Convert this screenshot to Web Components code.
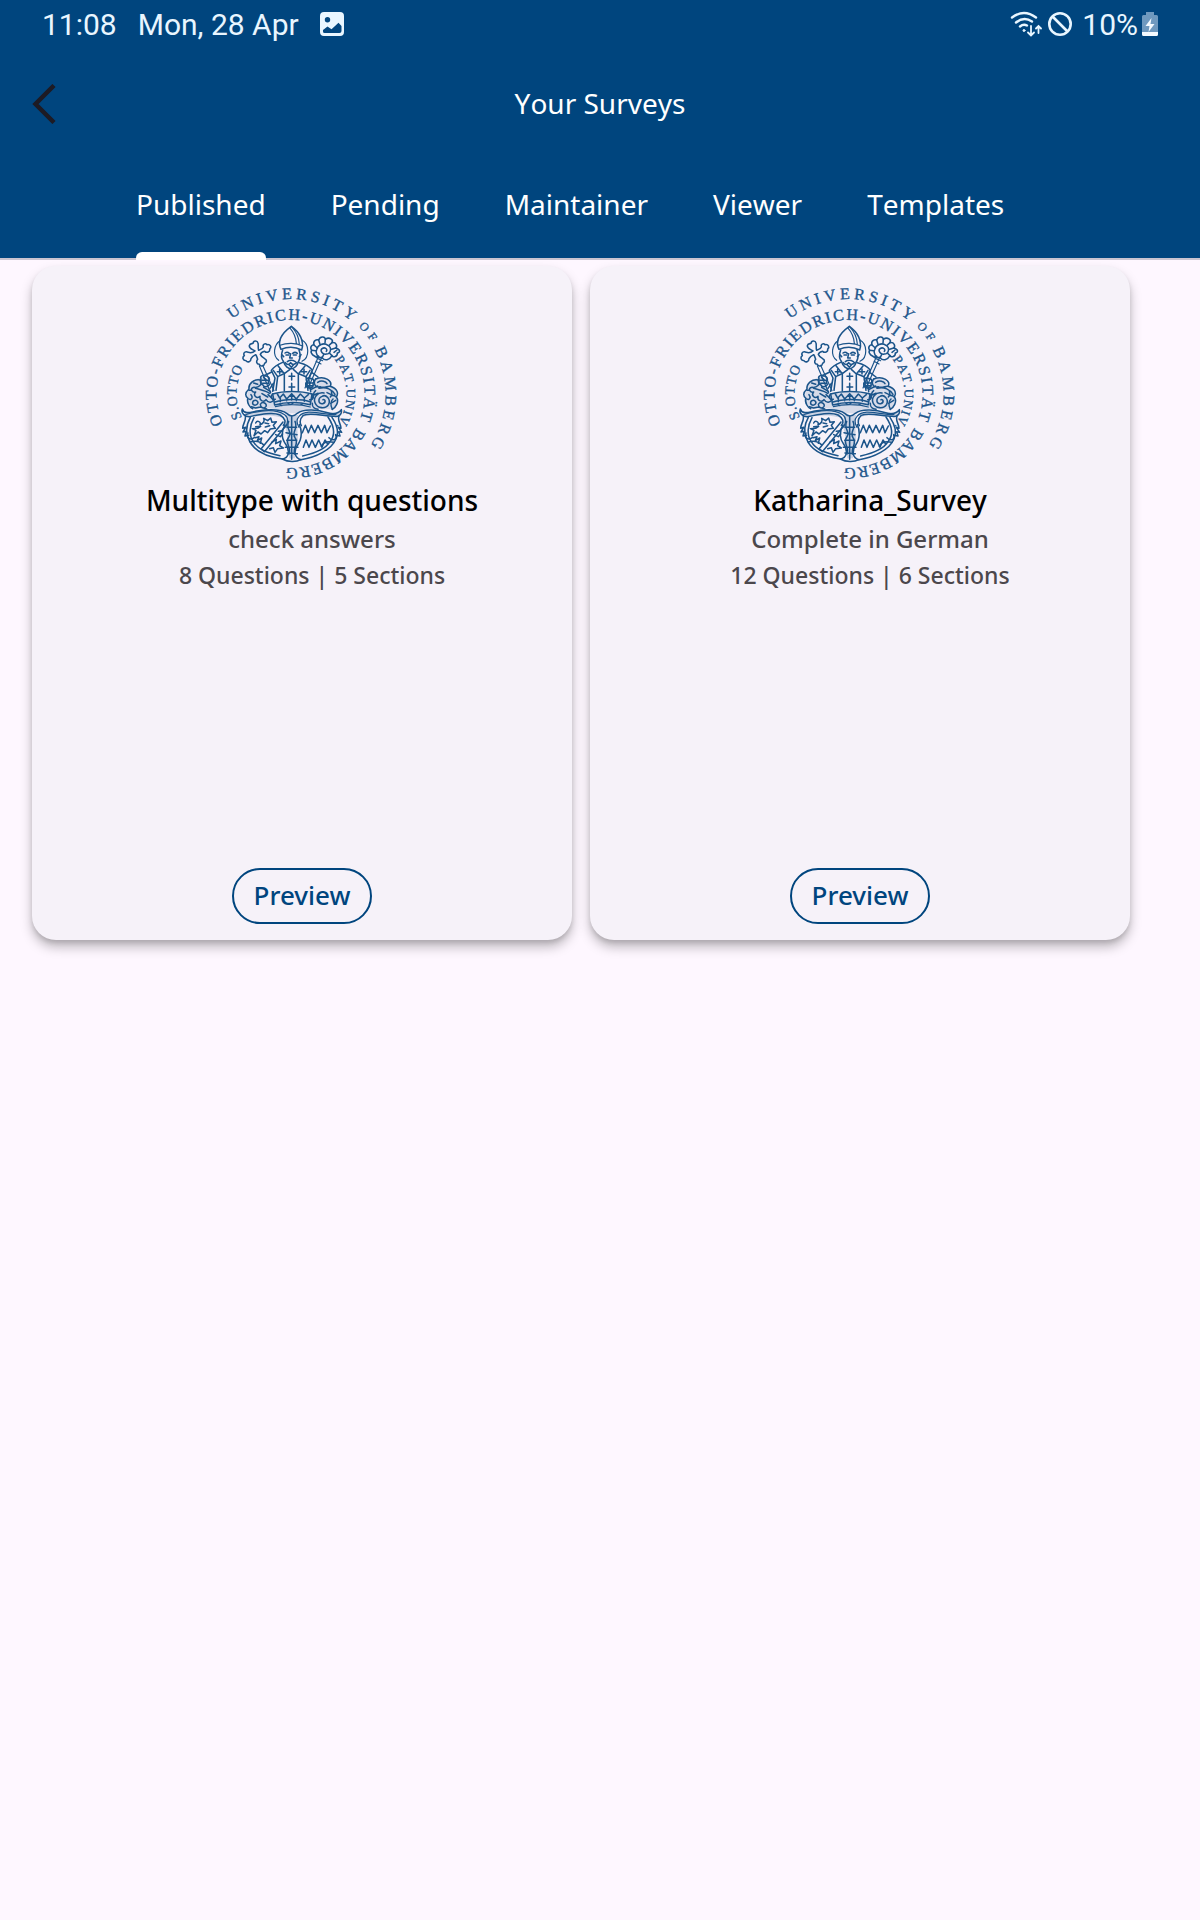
<!DOCTYPE html>
<html lang="en">
<head>
<meta charset="utf-8">
<meta name="viewport" content="width=device-width, initial-scale=1">
<title>Your Surveys</title>
<style>
  :root {
    --brand: #00457e;
    --surface: #fef7ff;
    --card: #f6f2f9;
    --muted: #4b474c;
    --divider: #cac4d0;
  }
  body {
    margin: 0;
    min-height: 100vh;
    background: var(--surface);
    font-family: "Noto Sans", "Open Sans", sans-serif;
    font-kerning: none;
  }
</style>
</head>
<body>
<survey-app></survey-app>

<template id="t-status">
  <style>
    :host {
      display: flex; justify-content: space-between; align-items: center;
      height: 48px; padding: 0 42px;
      font: 30px/46px Roboto, sans-serif; color: #e9f6ff;
    }
    div { display: flex; align-items: center; }
    span { padding-top: 2px; }
    .left { gap: 21px; }
    .right { gap: 6px; }
    .right span { margin: 0 -2px 0 4px; }
    svg { display: block; }
  </style>
  <div class="left">
    <span>11:08</span>
    <span>Mon, 28 Apr</span>
    <svg width="24" height="24" viewBox="0 0 24 24" aria-hidden="true">
      <path fill="#e9f6ff" fill-rule="evenodd" d="M4 0H20A4 4 0 0 1 24 4V20A4 4 0 0 1 20 24H4A4 4 0 0 1 0 20V4A4 4 0 0 1 4 0ZM7.500 5A2.700 2.700 0 1 0 7.500 10.400A2.700 2.700 0 1 0 7.500 5ZM3 19.500Q3 21 4.500 21H19.500Q21.500 21 21.500 19V14L18.500 10.800L11.500 17.300L7.500 14.500L3 18Z"/>
    </svg>
  </div>
  <div class="right">
    <svg width="32" height="26" viewBox="0 0 32 26" fill="none" stroke="#e9f6ff" stroke-width="2.400" stroke-linecap="round" aria-hidden="true">
      <path d="M2 6.500Q14 -2.500 26 6.500M6 11.500Q14 5 22 10.500M10 15.500Q13.500 12.500 17 14.500"/>
      <circle cx="14" cy="19.500" r="1" fill="#e9f6ff" stroke-width="1"/>
      <path d="M21 15V24M18 21.500L21 24.500L24 21.500M28.500 22V15.500M26 17.500L28.500 15L31 17.500" stroke-width="1.800"/>
    </svg>
    <svg width="24" height="24" viewBox="0 0 24 24" fill="none" stroke="#e9f6ff" stroke-width="2.600" aria-hidden="true">
      <circle cx="12" cy="12" r="10.700"/><path d="M4.500 4.500L19.500 19.500"/>
    </svg>
    <span>10%</span>
    <svg width="16" height="24" viewBox="0 0 16 24" aria-hidden="true">
      <path fill="#6f99bf" d="M4 0H12V3H14.500Q16 3 16 4.500V20H0V4.500Q0 3 1.500 3H4Z"/>
      <path fill="#f4faff" d="M0 20H16V22.500Q16 24 14.500 24H1.500Q0 24 0 22.500ZM9.500 6L3.500 14H7.500L6.500 20L12.500 12H8.500Z"/>
    </svg>
  </div>
</template>

<template id="t-bar">
  <style>
    :host {
      display: grid; grid-template-columns: 88px 1fr 88px; align-items: center;
      height: 112px; color: #fff;
    }
    button { width: 88px; height: 88px; padding: 0; border: 0; background: none; display: grid; place-items: center; }
    h1 { margin: 0; padding-bottom: 2px; font-size: 28px; line-height: 38px; font-weight: 400; text-align: center; }
  </style>
  <button type="button" aria-label="Back">
    <svg width="24" height="40" viewBox="0 0 24 40" fill="none" stroke="#1d1b24" stroke-width="4.500" aria-hidden="true"><path d="M22 1.500L3.500 20L22 38.500"/></svg>
  </button>
  <h1><slot></slot></h1>
</template>

<template id="t-tabs">
  <style>
    :host { display: block; box-shadow: inset 0 -2px var(--divider); padding-left: 136px; }
    nav { display: flex; gap: 65px; }
  </style>
  <nav aria-label="Survey groups"><slot></slot></nav>
</template>

<template id="t-tab">
  <style>
    :host { display: block; }
    a {
      display: block; padding-top: 24px;
      color: #fff; text-decoration: none; font-size: 28px; line-height: 40px;
    }
    a::after { content: ""; display: block; height: 8px; margin-top: 28px; }
    :host([selected]) a::after { background: #fff; border-radius: 6px 6px 0 0; }
  </style>
  <a href="#"><slot></slot></a>
</template>

<template id="t-seal">
  <style>
    :host { display: block; width: 192px; height: 192px; }
    svg { display: block; overflow: visible; }
    text { font-family: "Liberation Serif", serif; fill: #1d568c; stroke: #1d568c; stroke-width: .35px; }
    .lines path { stroke-width: 4.600px; }
    .lines .thin { stroke-width: 3.500px; }
  </style>
  <svg width="192" height="192" viewBox="206 288 192 192" role="img" aria-label="University seal">
    <g id="ring"></g>
    <g class="lines" transform="translate(230 320) scale(.33333)" fill="none" stroke="#1b548a" stroke-linejoin="round" stroke-linecap="round">
      <!-- shading behind the mantling, crown and scrolls -->
      <path fill="#1d568c" fill-opacity=".14" stroke="none" d="M101 170C70 176 50 195 52 225C45 245 55 262 70 268C110 262 145 264 168 280H200C225 264 270 268 310 268C328 245 322 205 300 195C290 170 262 172 257 180L240 205V222C210 214 160 214 130 222L118 200Z"/>
      <path fill="#1d568c" fill-opacity=".2" stroke="none" d="M168 285H204L202 322L204 360L195 415H178L168 370L172 350L165 315ZM37 270C60 288 110 262 160 284L150 292C110 280 80 292 52 290ZM334 270C315 288 260 262 212 284L220 290C260 280 300 292 325 288Z"/>
      <!-- halo and mitre -->
      <path class="thin" d="M146 121C126 106 132 74 150 62M216 124C240 112 238 72 216 60"/>
      <path d="M153 88C142 66 152 42 184 19C208 36 224 62 215 90C196 80 172 80 153 88Z"/>
      <path class="thin" d="M150 76C170 68 198 68 218 78M184 19C198 34 207 50 208 72M179 23C192 38 198 52 199 70"/>
      <!-- face -->
      <path d="M158 90C153 104 155 118 160 124C165 140 176 147 184 146C194 146 202 136 206 124C211 114 211 100 207 90"/>
      <path d="M165 99Q172 94 178 100M188 100Q195 94 202 100M182 101L179 114H187M172 125Q183 117 196 125M166 128C172 136 177 134 182 128C188 136 194 134 201 127M178 135L184 142L190 135M161 110L155 104M208 110L213 104"/>
      <path d="M168 105H176M190 105H199"/>
      <!-- vestment -->
      <path d="M158 127C144 133 132 140 124 151L135 174L128 214M208 128C224 132 238 139 247 150L236 176L242 215"/>
      <path d="M144 137L163 161L180 148M225 138L205 162L190 148M163 161V213M205 162V213M143 170L138 211M228 170L234 211"/>
      <path d="M130 151L143 170L160 162M240 151L228 170L208 162"/>
      <path d="M185 160V180M177 169H194M185 190V212M177 201H194M149 147V162M142 155H157M222 147V162M214 155H230"/>
      <!-- processional cross -->
      <path d="M75 93C66 87 57 86 58 77C60 69 66 72 69 70C70 61 82 61 84 69C86 76 83 82 86 91C92 88 98 86 100 81C97 73 106 68 111 74C121 72 126 81 119 87C121 96 110 100 104 94C98 95 93 98 91 103C94 110 98 113 104 116C112 119 110 128 104 130C102 140 91 140 88 133C79 132 78 124 83 118C81 111 80 107 77 104C71 107 66 110 63 116C63 125 53 129 48 122C38 122 36 112 43 107C38 98 47 92 55 97C62 99 69 98 75 93Z"/>
      <path class="thin" d="M88 137L122 219M98 136L132 212"/>
      <path d="M93 176C89 169 99 163 107 168C117 168 122 178 115 184L118 194C111 203 101 202 99 195C91 193 90 184 93 176ZM96 181H114M98 190H114M101 173L108 178"/>
      <!-- crozier -->
      <path class="thin" d="M234 205L276 110M225 204L266 108M258 124L273 132M261 115L278 122"/>
      <path d="M269 113C251 112 239 99 245 91C237 80 249 73 252 75C248 63 259 57 266 60C272 45 286 52 286 58C299 49 311 60 306 68C319 66 323 79 317 84C332 88 331 98 322 99C323 111 309 113 306 107C298 121 284 123 277 114C262 114 255 98 260 89C263 75 281 66 294 76C307 83 302 102 289 102C278 105 269 92 276 86C285 80 294 88 289 94"/>
      <path d="M252 75L262 84M266 60L270 73M286 58L285 69M306 68L297 76M317 84L305 88M306 107L298 99M245 91L257 92M312 97L321 90M276 114L281 104"/>
      <path d="M231 184C226 176 236 170 242 176C252 175 254 184 249 190C252 201 242 208 235 202C226 202 225 190 231 184ZM232 189H248M233 197H247"/>
      <!-- sleeves and mantling -->
      <path d="M125 156L101 168M121 214L101 202M130 190L120 205M246 158L264 171M242 209L263 198"/>
      <path d="M91 180C73 176 55 190 57 207C43 219 46 230 54 235C49 247 60 264 68 266M257 177C286 166 308 184 301 199C323 207 326 220 319 231C329 245 316 264 307 268"/>
      <path d="M91 180C98 193 87 204 72 202C58 204 65 219 77 216C68 226 80 238 90 229C87 244 103 247 108 239C116 251 126 247 131 241M71 189L83 193M77 205C93 210 107 212 119 220M63 224C70 232 64 242 57 237M70 243C79 237 87 246 82 252C74 260 63 252 70 243ZM91 253C98 242 112 251 108 259C102 268 91 263 91 253ZM64 260L77 264L91 261L110 267M96 221L113 231M65 211L57 211M114 224L125 234"/>
      <path d="M257 177C247 191 258 204 270 200C280 207 295 196 301 199M263 187C275 179 288 185 291 191M267 205C289 198 307 210 315 223M257 212C248 218 252 227 246 235M319 231C311 224 303 225 301 231M307 268C300 254 303 242 309 237M282 219C263 215 249 233 255 248C262 266 287 268 296 253C303 237 288 222 276 229C262 235 265 254 278 251C289 248 286 237 279 239M247 250C246 261 255 267 264 268M291 218L302 223M304 212L306 226M252 225L264 220M302 250L317 241"/>
      <!-- crown -->
      <path d="M128 222C160 212 213 212 246 222L241 254C207 246 165 246 134 255Z"/>
      <path d="M128 222C119 230 126 241 136 238M246 222C254 230 250 240 239 239M142 222L149 234L160 222L170 237L185 221L199 237L211 222L223 234L235 224M135 246C164 236 214 236 240 245M151 235V245M170 237V242M199 237V242M223 234V244M185 221V241M178 229H193"/>
      <path class="thin" d="M136 260C165 252 209 252 241 261M148 252L156 257M173 249L181 254L190 249M213 252L222 257"/>
      <!-- scrolled shield tops -->
      <path d="M37 267C42 285 64 276 81 273C116 268 152 265 171 281C182 291 194 288 202 280C222 264 266 270 293 278C307 283 323 282 334 269C337 285 324 292 313 289C283 289 243 276 220 286C210 296 208 307 214 317M37 267C31 282 49 291 59 290C91 283 128 275 150 285C166 295 169 306 160 316"/>
      <path class="thin" d="M49 283C88 272 133 264 164 284C177 294 175 306 167 321M318 284C276 285 229 263 207 289C199 298 201 312 207 322"/>
      <path d="M45 284C51 299 39 309 38 325L47 322L39 336L49 334L45 348L56 346M328 286C320 299 332 309 333 325L325 322L335 337L326 335L330 348L317 346"/>
      <!-- shields -->
      <path d="M61 292C51 310 46 333 55 355C68 393 109 410 157 417C177 414 180 393 168 374C153 354 155 332 165 315M72 293C59 316 55 346 70 365C84 390 113 399 150 407M306 292C321 314 328 335 318 357C305 388 259 413 213 419C192 413 191 391 203 375C218 354 215 329 208 314M294 291C315 322 315 347 300 365C285 391 249 401 218 408"/>
      <path d="M157 417C175 427 198 427 213 419M185 290V418M176 304C165 328 189 333 176 352C163 369 185 381 177 402M195 304C206 327 183 335 195 353C209 369 187 383 194 403M171 322H200M168 338L201 344M170 361H200M166 382H204M171 399L202 401"/>
      <path d="M54 339C47 357 63 361 74 352M317 344C323 360 307 364 297 353M61 366C80 361 92 366 100 374M311 367C291 362 279 369 274 379"/>
      <!-- lion with bend -->
      <path d="M93 387L159 306M103 395L167 318M93 387L103 395"/>
      <path d="M77 309C82 299 94 306 90 314C99 312 105 303 101 295L113 302L122 294L126 307L139 305L130 316L136 325L121 327L113 338L104 332L93 342L84 336L72 347L78 331L67 326L83 325L92 319L77 320M105 309L116 311M106 321L119 317M76 353L87 350L82 362L95 354L91 370M125 367L139 358L137 371L153 363L149 377L160 384L143 386L135 397L130 383L119 386M137 344L151 350L158 342M145 334L157 332"/>
      <!-- indented bars -->
      <path d="M217 338L226 316L235 338L244 316L254 338L264 316L274 338L284 316L291 338L301 318M220 382L228 360L237 382L246 360L256 382L266 360L276 382L285 360L293 372"/>
    </g>
  </svg>
</template>

<template id="t-card">
  <style>
    :host {
      display: flex; flex-direction: column; align-items: center;
      box-sizing: border-box; min-height: 674px; padding: 22px 20px 16px;
      border-radius: 24px; background: var(--card);
      box-shadow: 0 7px 12px rgba(0,0,0,.26), 0 3px 4px rgba(0,0,0,.1);
    }
    .text { padding-left: 20px; text-align: center; color: var(--muted); }
    h2, p { margin: 0; font-weight: 500; }
    h2 { font-size: 28px; line-height: 40px; color: #000; }
    p { font-size: 24px; line-height: 34px; margin-top: 2px; }
    p.count { font-size: 23px; }
    button {
      margin-top: auto; height: 56px; padding: 0 20px 2px;
      border: 2px solid var(--brand); border-radius: 28px; background: none;
      font: 500 26px/34px "Noto Sans", "Open Sans", sans-serif; color: var(--brand);
    }
  </style>
  <university-seal></university-seal>
  <div class="text">
    <h2><slot></slot></h2>
    <p><slot name="about"></slot></p>
    <p class="count"><slot name="questions"></slot> Questions | <slot name="sections"></slot> Sections</p>
  </div>
  <button type="button">Preview</button>
</template>

<template id="t-app">
  <style>
    :host { display: block; }
    header { background: var(--brand); }
    main {
      display: grid; grid-template-columns: 1fr 1fr; gap: 18px;
      padding: 6px 70px 24px 32px;
    }
  </style>
  <header>
    <status-bar></status-bar>
    <title-bar>Your Surveys</title-bar>
    <tab-list>
      <tab-item selected>Published</tab-item>
      <tab-item>Pending</tab-item>
      <tab-item>Maintainer</tab-item>
      <tab-item>Viewer</tab-item>
      <tab-item>Templates</tab-item>
    </tab-list>
  </header>
  <main>
    <survey-card>Multitype with questions<span slot="about">check answers</span><span slot="questions">8</span><span slot="sections">5</span></survey-card>
    <survey-card>Katharina_Survey<span slot="about">Complete in German</span><span slot="questions">12</span><span slot="sections">6</span></survey-card>
  </main>
</template>

<script>
  class TemplateElement extends HTMLElement {
    constructor() {
      super();
      this.attachShadow({ mode: "open" })
        .append(document.getElementById(this.constructor.template).content.cloneNode(true));
    }
  }

  class StatusBar extends TemplateElement { static template = "t-status"; }
  class TitleBar extends TemplateElement { static template = "t-bar"; }
  class TabList extends TemplateElement { static template = "t-tabs"; }
  class TabItem extends TemplateElement { static template = "t-tab"; }
  class SurveyCard extends TemplateElement { static template = "t-card"; }
  class SurveyApp extends TemplateElement { static template = "t-app"; }

  // Each inscription: text, baseline radius, font size, angles (clockwise from
  // the top) of the centres of its first and last letters.
  const INSCRIPTIONS = [
    ["UNIVERSITY", 95, 16, -34.6, 36.5],
    ["OF", 96, 12, 47.7, 55],
    ["BAMBERG", 95, 16, 65.3, 119.3],
    ["OTTO-FRIEDRICH-UNIVERSITÄT", 74, 16, -109.5, 106.5],
    ["BAMBERG", 74, 16, 121, 179],
    ["S.OTTO", 54, 14, -112, -66],
    ["PAT.UNIV.", 56, 13, 55.3, 124]
  ];

  class UniversitySeal extends TemplateElement {
    static template = "t-seal";
    constructor() {
      super();
      const ring = this.shadowRoot.getElementById("ring");
      const pen = document.createElement("canvas").getContext("2d");
      for (const [label, radius, size, from, to] of INSCRIPTIONS) {
        pen.font = size + 'px "Liberation Serif"';
        const widths = [...label].map(c => pen.measureText(c).width);
        const n = widths.length;
        const inner = widths.reduce((a, b) => a + b, 0) - (widths[0] + widths[n - 1]) / 2;
        const arc = (to - from) * Math.PI / 180 * radius;
        const gap = (arc - inner) / (n - 1);
        const xs = [], ys = [], turns = [];
        let along = from * Math.PI / 180 * radius;
        widths.forEach((w, i) => {
          if (i) along += (widths[i - 1] + w) / 2 + gap;
          const a = along / radius;
          xs.push((290.5 + radius * Math.sin(a) - w / 2 * Math.cos(a)).toFixed(2));
          ys.push((394 - radius * Math.cos(a) - w / 2 * Math.sin(a)).toFixed(2));
          turns.push((a * 180 / Math.PI).toFixed(2));
        });
        const text = document.createElementNS("http://www.w3.org/2000/svg", "text");
        text.setAttribute("x", xs.join(" "));
        text.setAttribute("y", ys.join(" "));
        text.setAttribute("rotate", turns.join(" "));
        text.setAttribute("font-size", size);
        text.textContent = label;
        ring.append(text);
      }
    }
  }

  customElements.define("university-seal", UniversitySeal);
  customElements.define("status-bar", StatusBar);
  customElements.define("title-bar", TitleBar);
  customElements.define("tab-item", TabItem);
  customElements.define("tab-list", TabList);
  customElements.define("survey-card", SurveyCard);
  customElements.define("survey-app", SurveyApp);
</script>
</body>
</html>
